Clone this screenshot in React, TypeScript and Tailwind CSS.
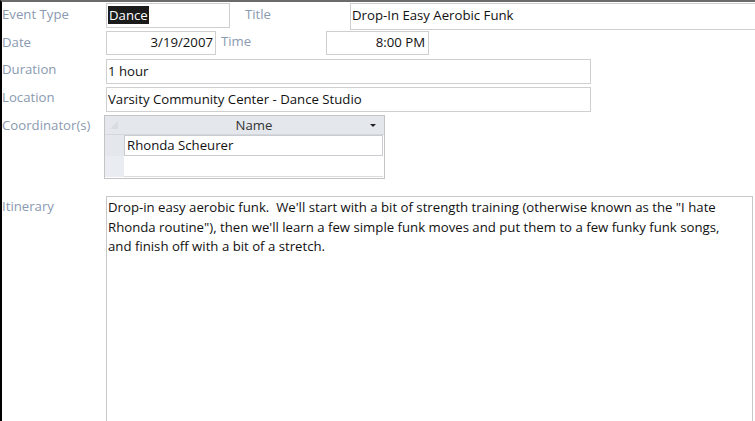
import React from "react";

const font = { fontFamily: "'Open Sans', 'Noto Sans', sans-serif" };

function Label({ children, className = "" }: { children: React.ReactNode; className?: string }) {
  return <div className={`text-[#8a9ab0] ${className}`}>{children}</div>;
}

export default function App() {
  return (
    <div
      className="w-[755px] h-[421px] overflow-hidden bg-white border-t-2 border-[#6b6b6b] border-l-2 border-l-black text-[13.2px] text-[#111] leading-[19px]"
      style={font}
    >
      {/* Row 1 */}
      <div className="flex items-start h-[28px] pt-[1px]">
        <Label className="w-[104px] pt-[2px]">Event Type</Label>
        <div className="w-[124px] h-[25px] border border-[#cfcfcf] pl-[1px] pt-[2px]">
          <span className="bg-[#1b1b1b] text-white px-[1px]">Dance</span>
        </div>
        <Label className="ml-[15px] w-[105px] pt-[2px]">Title</Label>
        <div className="flex-1 h-[27px] border border-r-0 border-[#cfcfcf] pl-[1px] pt-[2px]">Drop-In Easy Aerobic Funk</div>
      </div>
      {/* Row 2 */}
      <div className="flex items-start h-[28px] pt-[1px]">
        <Label className="w-[104px] pt-[2px]">Date</Label>
        <div className="w-[110px] h-[24px] border border-[#cfcfcf] text-right pr-[2px] pt-[1px]">3/19/2007</div>
        <Label className="ml-[5px] w-[105px] pt-[1px]">Time</Label>
        <div className="w-[103px] h-[24px] border border-[#cfcfcf] text-right pr-[3px] pt-[1px]">8:00 PM</div>
      </div>
      {/* Row 3 */}
      <div className="flex items-start h-[28px] pt-[1px]">
        <Label className="w-[104px] pt-[1px]">Duration</Label>
        <div className="w-[485px] h-[25px] border border-[#cfcfcf] pl-[1px] pt-[2px]">1 hour</div>
      </div>
      {/* Row 4 */}
      <div className="flex items-start h-[28px] pt-[1px]">
        <Label className="w-[104px] pt-[1px]">Location</Label>
        <div className="w-[485px] h-[25px] border border-[#cfcfcf] pl-[1px] pt-[2px]">Varsity Community Center - Dance Studio</div>
      </div>
      {/* Row 5: datasheet */}
      <div className="flex items-start pt-[1px]">
        <Label className="w-[102px] pt-[1px]">Coordinator(s)</Label>
        <div className="w-[281px] h-[64px] border border-[#c4c4c4] bg-white">
          <div className="flex h-[19px] bg-[#e4e7ec] border-b border-[#d4d7dc]">
            <div className="w-[19px] relative">
              <svg width="10" height="10" className="absolute left-[4px] top-[4px]">
                <path d="M9 1 L1 9 L9 9 Z" fill="#d9dce1" />
              </svg>
            </div>
            <div className="flex-1 flex items-center justify-center relative text-[#333]">
              Name
              <svg width="6" height="4" className="absolute right-[8px] top-[8px]">
                <path d="M0 0 L6 0 L3 3 Z" fill="#222" />
              </svg>
            </div>
          </div>
          <div className="flex h-[21px]">
            <div className="w-[19px] bg-[#e4e7ec]" />
            <div className="flex-1 border border-[#c9ccd1] pl-[2px] pt-[0px] mr-[1px]">Rhonda Scheurer</div>
          </div>
          <div className="flex h-[21px]">
            <div className="w-[19px] bg-[#e9ecf0]" />
            <div className="flex-1 border-b border-[#dcdcdc] mr-[1px]" />
          </div>
        </div>
      </div>
      {/* Itinerary */}
      <div className="flex items-start mt-[17px]">
        <Label className="w-[104px] pt-[1px]">Itinerary</Label>
        <div className="w-[647px] h-[240px] border border-[#c8c8c8] pl-[1px] pt-[1px] leading-[19.5px] whitespace-nowrap">
          Drop-in easy aerobic funk.&nbsp; We'll start with a bit of strength training (otherwise known as the "I hate
          <br />
          Rhonda routine"), then we'll learn a few simple funk moves and put them to a few funky funk songs,
          <br />
          and finish off with a bit of a stretch.
        </div>
      </div>
    </div>
  );
}
